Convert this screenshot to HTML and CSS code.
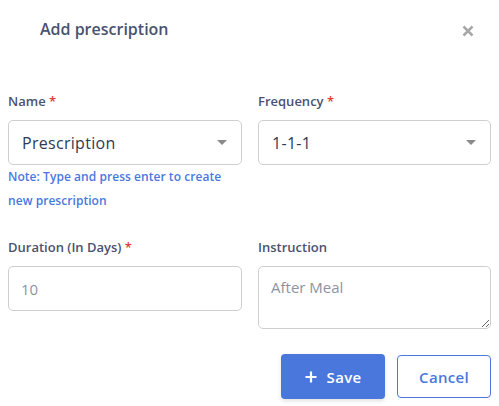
FILE: index.html
```html
<!DOCTYPE html>
<html lang="en">
<head>
<meta charset="utf-8">
<title>Add prescription</title>
<link rel="stylesheet" href="styles.css">
</head>
<body>
<div class="modal">
  <div class="modal-header">
    <h2 class="modal-title">Add prescription</h2>
    <button class="close" aria-label="Close">
      <svg width="12" height="12" viewBox="0 0 12 12"><path d="M1.5 1.5L10.5 10.5M10.5 1.5L1.5 10.5" stroke="#a8a8a8" stroke-width="2.5" stroke-linecap="butt"/></svg>
    </button>
  </div>
  <form class="form">
    <div class="field">
      <label class="label">Name <span class="req">*</span></label>
      <div class="select">
        <span class="select-value">Prescription</span>
        <span class="caret"></span>
      </div>
      <p class="note">Note: Type and press enter to create new prescription</p>
    </div>
    <div class="field">
      <label class="label">Frequency <span class="req">*</span></label>
      <div class="select">
        <span class="select-value">1-1-1</span>
        <span class="caret"></span>
      </div>
    </div>
    <div class="field">
      <label class="label">Duration (In Days) <span class="req">*</span></label>
      <input class="input" type="text" placeholder="10">
    </div>
    <div class="field">
      <label class="label">Instruction</label>
      <textarea class="textarea" placeholder="After Meal"></textarea>
    </div>
    <div class="actions">
      <button type="button" class="btn btn-primary">
        <svg width="12" height="12" viewBox="0 0 12 12"><path d="M6 0.5V11.5M0.5 6H11.5" stroke="#fff" stroke-width="2.2"/></svg>
        <span>Save</span>
      </button>
      <button type="button" class="btn btn-outline">Cancel</button>
    </div>
  </form>
</div>
</body>
</html>
```
FILE: styles.css
```css
* { box-sizing: border-box; }
html, body { margin: 0; padding: 0; background: #fff; }
body {
  font-family: "Open Sans", "Noto Sans", sans-serif;
  color: #495272;
  width: 499px;
  height: 406px;
  overflow: hidden;
}
.modal { width: 499px; height: 406px; background: #fff; }
.modal-header {
  height: 60px;
  display: flex;
  align-items: center;
  justify-content: space-between;
  padding: 0 25px 2px 40px;
}
.modal-title {
  margin: 0;
  font-size: 16px;
  font-weight: 600;
  color: #48536f;
  letter-spacing: 0;
}
.close {
  border: 0;
  background: none;
  padding: 0;
  width: 12px;
  height: 12px;
  display: flex;
  margin-top: 4px;
}
.form {
  display: grid;
  grid-template-columns: 234px 233px;
  column-gap: 16px;
  row-gap: 24px;
  padding: 31px 8px 0 8px;
}
.field { display: flex; flex-direction: column; }
.label {
  font-size: 13px;
  line-height: 20px;
  font-weight: 600;
  color: #4a5270;
  margin-bottom: 9px;
}
.req { color: #e53935; }
.select {
  height: 45px;
  border: 1px solid #cfcfcf;
  border-radius: 5px;
  display: flex;
  align-items: center;
  justify-content: space-between;
  padding: 0 14px 0 13px;
}
.select-value { font-size: 16px; color: #2f3a55; letter-spacing: 0.3px; }
.caret {
  width: 0; height: 0;
  border-left: 5px solid transparent;
  border-right: 5px solid transparent;
  border-top: 5px solid #8a8a8a;
}
.note {
  margin: 0;
  max-width: 222px;
  font-size: 12px;
  line-height: 24px;
  color: #4a78e0;
  font-weight: 600;
  letter-spacing: 0.05px;
}
.input, .textarea {
  font-family: inherit;
  border: 1px solid #cfcfcf;
  border-radius: 5px;
  font-size: 15px;
  padding: 0 12px;
  color: #333;
  outline: none;
}
.input { height: 45px; }
.textarea { height: 63px; padding-top: 10px; resize: vertical; }
.input::placeholder, .textarea::placeholder { color: #8d93a4; }
.actions {
  grid-column: 1 / -1;
  display: flex;
  justify-content: flex-end;
  align-items: flex-start;
  gap: 12px;
  margin-top: 1px;
}
.btn {
  font-family: inherit;
  font-size: 15px;
  font-weight: 600;
  border-radius: 4px;
  cursor: pointer;
  letter-spacing: 0.3px;
}
.btn-primary {
  width: 104px; height: 45px;
  background: #4a77dc;
  color: #fff;
  border: 0;
  display: flex;
  align-items: center;
  justify-content: center;
  gap: 10px;
  box-shadow: 0 2px 4px rgba(0,0,0,0.12);
}
.btn-outline {
  width: 94px; height: 43px;
  margin-top: 1px;
  background: #fff;
  color: #4a77dc;
  border: 1px solid #4a77dc;
}
```
